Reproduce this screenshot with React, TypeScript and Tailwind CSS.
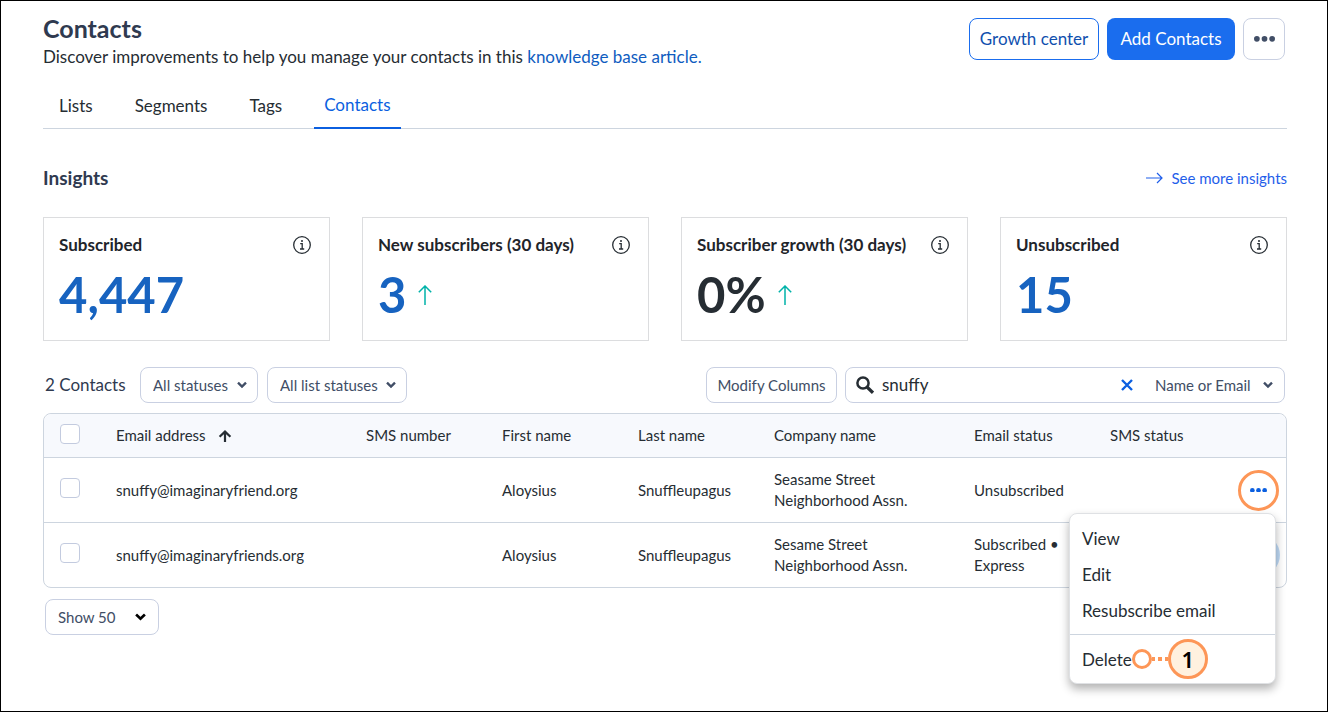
import { useState } from "react";

const tabs = ["Lists", "Segments", "Tags", "Contacts"];

const stats = [
  { label: "Subscribed", value: "4,447", up: false, link: true },
  { label: "New subscribers (30 days)", value: "3", up: true, link: true },
  { label: "Subscriber growth (30 days)", value: "0%", up: true, link: false },
  { label: "Unsubscribed", value: "15", up: false, link: true },
];

const contacts = [
  { email: "snuffy@imaginaryfriend.org", first: "Aloysius", last: "Snuffleupagus", company: "Seasame Street Neighborhood Assn.", status: "Unsubscribed" },
  { email: "snuffy@imaginaryfriends.org", first: "Aloysius", last: "Snuffleupagus", company: "Sesame Street Neighborhood Assn.", status: "Subscribed • Express" },
];

function Dots({ className }: { className?: string }) {
  return (
    <svg viewBox="0 0 22 6" className={className} fill="currentColor" aria-hidden="true">
      <circle cx="3" cy="3" r="3" />
      <circle cx="11" cy="3" r="3" />
      <circle cx="19" cy="3" r="3" />
    </svg>
  );
}

function InfoIcon() {
  return (
    <svg viewBox="0 0 18 18" className="size-[18px]" fill="none" stroke="#262d33" aria-hidden="true">
      <circle cx="9" cy="9" r="8.3" strokeWidth="1.3" />
      <path d="M7.2 7.6h2v5.2M7 13h4.2" strokeWidth="1.3" />
      <circle cx="9" cy="5" r="1" fill="#262d33" stroke="none" />
    </svg>
  );
}

function UpArrow() {
  return (
    <svg viewBox="0 0 14 20" className="h-5 w-3.5" fill="none" stroke="#00b2a9" strokeWidth="1.5" aria-label="up">
      <path d="M7 20V1M0.8 7.2L7 1l6.2 6.2" />
    </svg>
  );
}

function Chevron({ className }: { className: string }) {
  return (
    <svg viewBox="0 0 10 7" className={`pointer-events-none absolute top-1/2 -translate-y-1/2 ${className}`} fill="none" stroke="currentColor" strokeWidth="2.4" aria-hidden="true">
      <path d="M1 1.2l4 3.8 4-3.8" />
    </svg>
  );
}

function Select({ label, option, width }: { label: string; option: string; width: string }) {
  return (
    <div className={`relative ${width}`}>
      <select aria-label={label} className="h-9 w-full appearance-none rounded-lg border border-[#c9d0e2] bg-white pl-3 text-[15px] text-[#414e66]">
        <option>{option}</option>
      </select>
      <Chevron className="right-[11px] w-[10px] text-[#414e66]" />
    </div>
  );
}

function Checkbox({ label }: { label: string }) {
  return <input type="checkbox" aria-label={label} className="mb-1 block size-5 appearance-none rounded border border-[#c3cbdf] bg-white checked:bg-[#1a6dee]" />;
}

function RowMenu() {
  const item = "block h-9 w-full px-3 text-left";
  return (
    <div role="menu" className="absolute top-full right-[10px] z-10 -mt-[9px] w-[207px] rounded-lg border border-[#dfe1e4] bg-white text-[17px] text-[#262d33] shadow-[0_5px_10px_rgba(0,0,0,0.3)]">
      <div className="py-1.5">
        <button role="menuitem" className={item}>View</button>
        <button role="menuitem" className={item}>Edit</button>
        <button role="menuitem" className={item}>Resubscribe email</button>
      </div>
      <div className="flex items-center border-t border-[#cdd5df] py-1.5 pl-3">
        <button role="menuitem" className="h-9 text-left">Delete</button>
        {/* step marker */}
        <span className="size-5 shrink-0 rounded-full border-3 border-[#fd9657] bg-white" />
        <svg viewBox="0 0 16 4" className="h-1 w-4" fill="#fd9657" aria-hidden="true">
          <path d="M0 0h3v4H0zM6 0h4v4H6zM13 0h3v4h-3z" />
        </svg>
        <span className="-my-0.5 flex size-10 shrink-0 items-center justify-center rounded-full border-3 border-[#fd9657] bg-[#fff1df] font-['Noto_Sans',sans-serif] text-[22px] font-semibold text-black">1</span>
      </div>
    </div>
  );
}

export default function App() {
  const [query, setQuery] = useState("snuffy");

  return (
    <main className="min-h-screen border border-black bg-white pr-10 pb-10 pl-[42px] font-[Lato,sans-serif] text-[17px] text-[#262d33]">
      <header className="flex items-start justify-between pt-[11px]">
        <div>
          <h1 className="text-[25px] leading-8 font-bold text-[#2f3a50]">Contacts</h1>
          <p className="leading-[26px]">
            Discover improvements to help you manage your contacts in this{" "}
            <a href="#" className="text-[#0f5cc0]">knowledge base article.</a>
          </p>
        </div>
        <div className="mt-1.5 mr-0.5 flex gap-2">
          <button className="h-[42px] w-[130px] rounded-lg border border-[#1a6dee] text-[#0f4fae]">Growth center</button>
          <button className="h-[42px] w-32 rounded-lg bg-[#1a6dee] text-white">Add Contacts</button>
          <button aria-label="More" className="flex size-[42px] items-center justify-center rounded-lg border border-[#c9d0e2] text-[#414e66]">
            <Dots className="w-[21px]" />
          </button>
        </div>
      </header>

      <nav className="mt-[13px] flex h-[46px] gap-[22px] border-b border-[#cdd5df] pl-1.5">
        {tabs.map((t) => (
          <a
            key={t}
            href="#"
            className={t === "Contacts" ? "flex h-[46px] items-center border-b-2 border-[#0b5fe0] px-2.5 text-[#0b5fe0]" : "flex h-[46px] items-center px-2.5"}
          >
            {t}
          </a>
        ))}
      </nav>

      <section>
        <div className="flex items-center justify-between pt-[35px]">
          <h2 className="text-[19px] leading-7 font-bold text-[#2f3a50]">Insights</h2>
          <a href="#" className="flex items-center gap-2 text-[15px] leading-6 text-[#1f5eea]">
            <svg viewBox="0 0 17 12" className="h-3 w-[17px]" fill="none" stroke="currentColor" strokeWidth="1.2" aria-hidden="true">
              <path d="M0 6h16M11 1l5 5-5 5" />
            </svg>
            See more insights
          </a>
        </div>
        <div className="mt-[25px] grid grid-cols-4 gap-8">
          {stats.map((s) => (
            <div key={s.label} className="h-[124px] border border-[#dcdddf] pt-[15px] pr-[18px] pl-[15px]">
              <div className="flex h-6 items-center justify-between">
                <h3 className="font-bold text-[#1f252b]">{s.label}</h3>
                <button aria-label={`About ${s.label}`}><InfoIcon /></button>
              </div>
              <div className="mt-2.5 flex h-14 items-center gap-3">
                <span className={s.link ? "text-[49px] font-bold text-[#1763c0]" : "text-[49px] font-bold text-[#262d33]"}>{s.value}</span>
                {s.up && <UpArrow />}
              </div>
            </div>
          ))}
        </div>
      </section>

      <div className="mt-[26px] mr-0.5 ml-0.5 flex items-center">
        <span className="w-[95px] text-[#2f3a50]">2 Contacts</span>
        <div className="flex gap-[9px]">
          <Select label="Status" option="All statuses" width="w-[118px]" />
          <Select label="List status" option="All list statuses" width="w-[140px]" />
        </div>
        <button className="ml-auto h-9 w-[131px] rounded-lg border border-[#c9d0e2] text-[15px] text-[#414e66]">Modify Columns</button>
        <div className="ml-2 flex h-9 w-[440px] items-center rounded-lg border border-[#c9d0e2] pl-2.5">
          <svg viewBox="0 0 18 18" className="size-[18px] shrink-0" fill="none" stroke="#262d33" aria-hidden="true">
            <circle cx="7" cy="7" r="5.6" strokeWidth="2.5" />
            <path d="M11 11l6 5.8" strokeWidth="3.2" />
          </svg>
          <input aria-label="Search contacts" value={query} onChange={(e) => setQuery(e.target.value)} className="ml-2 min-w-0 flex-1 outline-none" />
          <button aria-label="Clear search" onClick={() => setQuery("")} className="text-[#0b5fe0]">
            <svg viewBox="0 0 12 12" className="size-3" fill="none" stroke="currentColor" strokeWidth="2.4" aria-hidden="true">
              <path d="M1 1l10 10M11 1L1 11" />
            </svg>
          </button>
          <div className="relative ml-[22px] w-[129px]">
            <select aria-label="Search by" className="w-full appearance-none text-[15px] text-[#414e66]">
              <option>Name or Email</option>
            </select>
            <Chevron className="right-[11px] w-[10px] text-[#414e66]" />
          </div>
        </div>
      </div>

      <table className="mt-2.5 w-full table-fixed border-separate border-spacing-0 rounded-lg border border-[#cdd5df] text-left text-[15px] leading-[21px]">
        <thead>
          <tr className="h-[44px] [&>th]:border-b [&>th]:border-[#cdd5df] [&>th]:bg-[#f7f9fd] [&>th]:p-0 [&>th]:pl-4 [&>th]:font-normal">
            <th className="w-14 rounded-tl-lg"><Checkbox label="Select all" /></th>
            <th className="w-[250px]">
              <button className="flex items-center gap-3">
                Email address
                <svg viewBox="0 0 14 12" className="h-3 w-3.5" fill="none" stroke="#262d33" strokeWidth="2.2" aria-hidden="true">
                  <path d="M7 12V1.6M1.6 6.8L7 1.6l5.4 5.2" />
                </svg>
              </button>
            </th>
            <th className="w-[136px]">SMS number</th>
            <th className="w-[136px]">First name</th>
            <th className="w-[136px]">Last name</th>
            <th className="w-[200px]">Company name</th>
            <th className="w-[136px]">Email status</th>
            <th>SMS status</th>
            <th className="w-14 rounded-tr-lg" aria-label="Actions" />
          </tr>
        </thead>
        <tbody>
          {contacts.map((c, i) => (
            <tr key={c.email} className="h-[65px] last:h-16 [&>td]:py-0 [&>td]:pl-4 [&:first-child>td]:border-b [&:first-child>td]:border-[#cdd5df]">
              <td><Checkbox label={`Select ${c.email}`} /></td>
              <td>{c.email}</td>
              <td />
              <td>{c.first}</td>
              <td>{c.last}</td>
              <td className="pr-8">{c.company}</td>
              <td className="pr-8">{c.status}</td>
              <td />
              <td className="relative">
                {i === 0 ? (
                  <button aria-label="Actions" className="-ml-2 flex size-[41px] items-center justify-center rounded-full border-3 border-[#fd9657] text-[#0b5fe0]">
                    <Dots className="w-[17px]" />
                  </button>
                ) : (
                  <button aria-label="Actions" className="-ml-2 flex size-[42px] items-center justify-center rounded-full bg-[#bfdaf6] text-[#0b5fe0]">
                    <Dots className="w-[17px]" />
                  </button>
                )}
                {i === 0 && <RowMenu />}
              </td>
            </tr>
          ))}
        </tbody>
      </table>

      <div className="relative mt-[11px] ml-0.5 w-[114px]">
        <select aria-label="Rows per page" className="h-9 w-full appearance-none rounded-lg border border-[#c9d0e2] bg-white pl-3 text-[15px] text-[#414e66]">
          <option>Show 50</option>
        </select>
        <Chevron className="right-[13px] w-[11px] text-black" />
      </div>
    </main>
  );
}
